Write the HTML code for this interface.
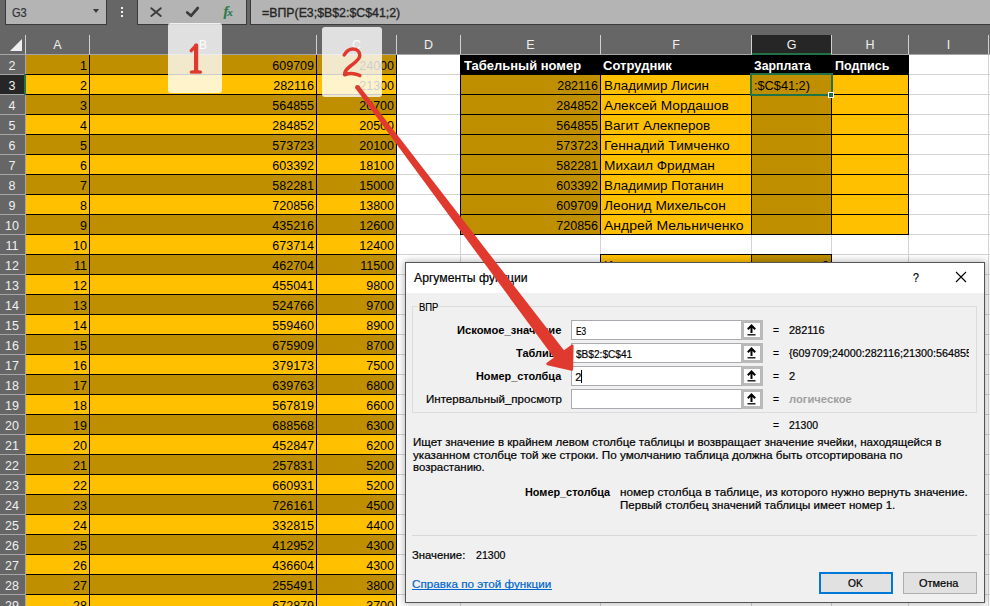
<!DOCTYPE html><html><head><meta charset="utf-8"><style>
*{box-sizing:border-box}
body{margin:0;width:990px;height:606px;overflow:hidden;position:relative;background:#fff;font-family:"Liberation Sans",sans-serif}
.a{position:absolute}
.t{position:absolute;white-space:nowrap;line-height:1;-webkit-text-stroke:0.2px currentColor}
.c{position:absolute;font-size:12.5px;color:#000;white-space:nowrap;line-height:23px}
.r{text-align:right}
.rh{position:absolute;left:0;width:24px;height:19px;background:#666;color:#f0f0f0;font-size:12.5px;text-align:center;line-height:23px}
.ch{position:absolute;top:35px;height:19px;background:#666;color:#f0f0f0;font-size:12.5px;text-align:center;line-height:20px}
</style></head><body>

<div class="a" style="left:0;top:0;width:990px;height:55px;background:#666"></div>
<div class="a" style="left:5px;top:-2px;width:102px;height:27px;background:#b4b4b4;border:1px solid #3a3a3a;border-top:none"></div>
<div class="t" style="left:12.40px;top:6.85px;font-size:12.3px;color:#333;transform:scaleX(0.9013);transform-origin:0.00px 0;">G3</div>
<div class="a" style="left:92.6px;top:9px;width:0;height:0;border-left:3.7px solid transparent;border-right:3.7px solid transparent;border-top:4.2px solid #3a3a3a"></div>
<div class="a" style="left:121px;top:7px;width:2px;height:2px;background:#f4f4f4"></div>
<div class="a" style="left:121px;top:11px;width:2px;height:2px;background:#f4f4f4"></div>
<div class="a" style="left:121px;top:15px;width:2px;height:2px;background:#f4f4f4"></div>
<div class="a" style="left:137px;top:-2px;width:110px;height:27px;background:#b4b4b4;border:1px solid #3a3a3a;border-top:none"></div>
<svg class="a" style="left:0;top:0" width="250" height="24"><path d="M151.3 8.2L160.8 16M160.8 8.2L151.3 16" stroke="#3c3c3c" stroke-width="1.9" stroke-linecap="round"/><path d="M187.2 12.4L191 15.8L197.8 8" stroke="#3c3c3c" stroke-width="2.7" fill="none" stroke-linecap="round" stroke-linejoin="round"/></svg>
<div class="t" style="left:223.5px;top:4px;font-family:'Liberation Serif',serif;font-style:italic;font-weight:bold;font-size:14.5px;color:#2a7a4a">f<span style="font-size:11px;position:relative;left:-1px">x</span></div>
<div class="a" style="left:250px;top:-2px;width:760px;height:27px;background:#b4b4b4;border:1px solid #3a3a3a;border-top:none"></div>
<div class="t" style="left:262.30px;top:6.85px;font-size:12.3px;color:#262626;transform:scaleX(1.0034);transform-origin:0.00px 0;-webkit-text-stroke:0.35px #262626;">=ВПР(E3;$B$2:$C$41;2)</div>
<div class="a" style="left:0;top:35px;width:990px;height:19px;background:#666"></div>
<svg class="a" style="left:10px;top:39px" width="13" height="13"><path d="M12 0L12 12L0 12Z" fill="#f0f0f0"/></svg>
<div class="ch" style="left:26px;width:63px;background:#666">A</div>
<div class="a" style="left:89px;top:35px;width:1px;height:19px;background:#d0d0d0"></div>
<div class="ch" style="left:90px;width:226px;background:#666">B</div>
<div class="a" style="left:316px;top:35px;width:1px;height:19px;background:#d0d0d0"></div>
<div class="ch" style="left:317px;width:79px;background:#666">C</div>
<div class="a" style="left:396px;top:35px;width:1px;height:19px;background:#d0d0d0"></div>
<div class="ch" style="left:397px;width:63px;background:#666">D</div>
<div class="a" style="left:460px;top:35px;width:1px;height:19px;background:#d0d0d0"></div>
<div class="ch" style="left:461px;width:139px;background:#666">E</div>
<div class="a" style="left:600px;top:35px;width:1px;height:19px;background:#d0d0d0"></div>
<div class="ch" style="left:601px;width:150px;background:#666">F</div>
<div class="a" style="left:751px;top:35px;width:1px;height:19px;background:#d0d0d0"></div>
<div class="ch" style="left:752px;width:79px;background:#262626">G</div>
<div class="a" style="left:831px;top:35px;width:1px;height:19px;background:#d0d0d0"></div>
<div class="ch" style="left:832px;width:76px;background:#666">H</div>
<div class="a" style="left:908px;top:35px;width:1px;height:19px;background:#d0d0d0"></div>
<div class="ch" style="left:909px;width:79px;background:#666">I</div>
<div class="a" style="left:988px;top:35px;width:1px;height:19px;background:#d0d0d0"></div>
<div class="a" style="left:25px;top:35px;width:1px;height:19px;background:#d0d0d0"></div>
<div class="a" style="left:0;top:54px;width:990px;height:1px;background:#a6a6a6"></div>
<div class="a" style="left:752px;top:53px;width:79px;height:2px;background:#217346"></div>
<div class="a" style="left:0;top:55px;width:25px;height:560px;background:#666"></div>
<div class="rh" style="top:55px;background:#666">2</div>
<div class="a" style="left:0;top:74px;width:25px;height:1px;background:#a6a6a6"></div>
<div class="rh" style="top:75px;background:#262626">3</div>
<div class="a" style="left:0;top:94px;width:25px;height:1px;background:#a6a6a6"></div>
<div class="rh" style="top:95px;background:#666">4</div>
<div class="a" style="left:0;top:114px;width:25px;height:1px;background:#a6a6a6"></div>
<div class="rh" style="top:115px;background:#666">5</div>
<div class="a" style="left:0;top:134px;width:25px;height:1px;background:#a6a6a6"></div>
<div class="rh" style="top:135px;background:#666">6</div>
<div class="a" style="left:0;top:154px;width:25px;height:1px;background:#a6a6a6"></div>
<div class="rh" style="top:155px;background:#666">7</div>
<div class="a" style="left:0;top:174px;width:25px;height:1px;background:#a6a6a6"></div>
<div class="rh" style="top:175px;background:#666">8</div>
<div class="a" style="left:0;top:194px;width:25px;height:1px;background:#a6a6a6"></div>
<div class="rh" style="top:195px;background:#666">9</div>
<div class="a" style="left:0;top:214px;width:25px;height:1px;background:#a6a6a6"></div>
<div class="rh" style="top:215px;background:#666">10</div>
<div class="a" style="left:0;top:234px;width:25px;height:1px;background:#a6a6a6"></div>
<div class="rh" style="top:235px;background:#666">11</div>
<div class="a" style="left:0;top:254px;width:25px;height:1px;background:#a6a6a6"></div>
<div class="rh" style="top:255px;background:#666">12</div>
<div class="a" style="left:0;top:274px;width:25px;height:1px;background:#a6a6a6"></div>
<div class="rh" style="top:275px;background:#666">13</div>
<div class="a" style="left:0;top:294px;width:25px;height:1px;background:#a6a6a6"></div>
<div class="rh" style="top:295px;background:#666">14</div>
<div class="a" style="left:0;top:314px;width:25px;height:1px;background:#a6a6a6"></div>
<div class="rh" style="top:315px;background:#666">15</div>
<div class="a" style="left:0;top:334px;width:25px;height:1px;background:#a6a6a6"></div>
<div class="rh" style="top:335px;background:#666">16</div>
<div class="a" style="left:0;top:354px;width:25px;height:1px;background:#a6a6a6"></div>
<div class="rh" style="top:355px;background:#666">17</div>
<div class="a" style="left:0;top:374px;width:25px;height:1px;background:#a6a6a6"></div>
<div class="rh" style="top:375px;background:#666">18</div>
<div class="a" style="left:0;top:394px;width:25px;height:1px;background:#a6a6a6"></div>
<div class="rh" style="top:395px;background:#666">19</div>
<div class="a" style="left:0;top:414px;width:25px;height:1px;background:#a6a6a6"></div>
<div class="rh" style="top:415px;background:#666">20</div>
<div class="a" style="left:0;top:434px;width:25px;height:1px;background:#a6a6a6"></div>
<div class="rh" style="top:435px;background:#666">21</div>
<div class="a" style="left:0;top:454px;width:25px;height:1px;background:#a6a6a6"></div>
<div class="rh" style="top:455px;background:#666">22</div>
<div class="a" style="left:0;top:474px;width:25px;height:1px;background:#a6a6a6"></div>
<div class="rh" style="top:475px;background:#666">23</div>
<div class="a" style="left:0;top:494px;width:25px;height:1px;background:#a6a6a6"></div>
<div class="rh" style="top:495px;background:#666">24</div>
<div class="a" style="left:0;top:514px;width:25px;height:1px;background:#a6a6a6"></div>
<div class="rh" style="top:515px;background:#666">25</div>
<div class="a" style="left:0;top:534px;width:25px;height:1px;background:#a6a6a6"></div>
<div class="rh" style="top:535px;background:#666">26</div>
<div class="a" style="left:0;top:554px;width:25px;height:1px;background:#a6a6a6"></div>
<div class="rh" style="top:555px;background:#666">27</div>
<div class="a" style="left:0;top:574px;width:25px;height:1px;background:#a6a6a6"></div>
<div class="rh" style="top:575px;background:#666">28</div>
<div class="a" style="left:0;top:594px;width:25px;height:1px;background:#a6a6a6"></div>
<div class="rh" style="top:595px;background:#666">29</div>
<div class="a" style="left:0;top:614px;width:25px;height:1px;background:#a6a6a6"></div>
<div class="a" style="left:25px;top:55px;width:1px;height:560px;background:#a6a6a6"></div>
<div class="a" style="left:24px;top:74px;width:2px;height:21px;background:#217346"></div>
<div class="a" style="left:397px;top:55px;width:600px;height:560px;background:#fff"></div>
<div class="a" style="left:460px;top:55px;width:1px;height:560px;background:#d4d4d4"></div>
<div class="a" style="left:600px;top:55px;width:1px;height:560px;background:#d4d4d4"></div>
<div class="a" style="left:751px;top:55px;width:1px;height:560px;background:#d4d4d4"></div>
<div class="a" style="left:831px;top:55px;width:1px;height:560px;background:#d4d4d4"></div>
<div class="a" style="left:908px;top:55px;width:1px;height:560px;background:#d4d4d4"></div>
<div class="a" style="left:988px;top:55px;width:1px;height:560px;background:#d4d4d4"></div>
<div class="a" style="left:397px;top:74px;width:600px;height:1px;background:#d4d4d4"></div>
<div class="a" style="left:397px;top:94px;width:600px;height:1px;background:#d4d4d4"></div>
<div class="a" style="left:397px;top:114px;width:600px;height:1px;background:#d4d4d4"></div>
<div class="a" style="left:397px;top:134px;width:600px;height:1px;background:#d4d4d4"></div>
<div class="a" style="left:397px;top:154px;width:600px;height:1px;background:#d4d4d4"></div>
<div class="a" style="left:397px;top:174px;width:600px;height:1px;background:#d4d4d4"></div>
<div class="a" style="left:397px;top:194px;width:600px;height:1px;background:#d4d4d4"></div>
<div class="a" style="left:397px;top:214px;width:600px;height:1px;background:#d4d4d4"></div>
<div class="a" style="left:397px;top:234px;width:600px;height:1px;background:#d4d4d4"></div>
<div class="a" style="left:397px;top:254px;width:600px;height:1px;background:#d4d4d4"></div>
<div class="a" style="left:397px;top:274px;width:600px;height:1px;background:#d4d4d4"></div>
<div class="a" style="left:397px;top:294px;width:600px;height:1px;background:#d4d4d4"></div>
<div class="a" style="left:397px;top:314px;width:600px;height:1px;background:#d4d4d4"></div>
<div class="a" style="left:397px;top:334px;width:600px;height:1px;background:#d4d4d4"></div>
<div class="a" style="left:397px;top:354px;width:600px;height:1px;background:#d4d4d4"></div>
<div class="a" style="left:397px;top:374px;width:600px;height:1px;background:#d4d4d4"></div>
<div class="a" style="left:397px;top:394px;width:600px;height:1px;background:#d4d4d4"></div>
<div class="a" style="left:397px;top:414px;width:600px;height:1px;background:#d4d4d4"></div>
<div class="a" style="left:397px;top:434px;width:600px;height:1px;background:#d4d4d4"></div>
<div class="a" style="left:397px;top:454px;width:600px;height:1px;background:#d4d4d4"></div>
<div class="a" style="left:397px;top:474px;width:600px;height:1px;background:#d4d4d4"></div>
<div class="a" style="left:397px;top:494px;width:600px;height:1px;background:#d4d4d4"></div>
<div class="a" style="left:397px;top:514px;width:600px;height:1px;background:#d4d4d4"></div>
<div class="a" style="left:397px;top:534px;width:600px;height:1px;background:#d4d4d4"></div>
<div class="a" style="left:397px;top:554px;width:600px;height:1px;background:#d4d4d4"></div>
<div class="a" style="left:397px;top:574px;width:600px;height:1px;background:#d4d4d4"></div>
<div class="a" style="left:397px;top:594px;width:600px;height:1px;background:#d4d4d4"></div>
<div class="a" style="left:397px;top:614px;width:600px;height:1px;background:#d4d4d4"></div>
<div class="a" style="left:26px;top:55px;width:371px;height:560px;background:#000"></div>
<div class="a" style="left:26px;top:55px;width:63px;height:19px;background:#bf8f00"></div>
<div class="a" style="left:90px;top:55px;width:226px;height:19px;background:#bf8f00"></div>
<div class="a" style="left:317px;top:55px;width:79px;height:19px;background:#bf8f00"></div>
<div class="c r" style="left:26px;top:55px;width:61px">1</div>
<div class="c r" style="left:90px;top:55px;width:224px">609709</div>
<div class="c r" style="left:317px;top:55px;width:77px">24000</div>
<div class="a" style="left:26px;top:75px;width:63px;height:19px;background:#ffc000"></div>
<div class="a" style="left:90px;top:75px;width:226px;height:19px;background:#ffc000"></div>
<div class="a" style="left:317px;top:75px;width:79px;height:19px;background:#ffc000"></div>
<div class="c r" style="left:26px;top:75px;width:61px">2</div>
<div class="c r" style="left:90px;top:75px;width:224px">282116</div>
<div class="c r" style="left:317px;top:75px;width:77px">21300</div>
<div class="a" style="left:26px;top:95px;width:63px;height:19px;background:#bf8f00"></div>
<div class="a" style="left:90px;top:95px;width:226px;height:19px;background:#bf8f00"></div>
<div class="a" style="left:317px;top:95px;width:79px;height:19px;background:#bf8f00"></div>
<div class="c r" style="left:26px;top:95px;width:61px">3</div>
<div class="c r" style="left:90px;top:95px;width:224px">564855</div>
<div class="c r" style="left:317px;top:95px;width:77px">20700</div>
<div class="a" style="left:26px;top:115px;width:63px;height:19px;background:#ffc000"></div>
<div class="a" style="left:90px;top:115px;width:226px;height:19px;background:#ffc000"></div>
<div class="a" style="left:317px;top:115px;width:79px;height:19px;background:#ffc000"></div>
<div class="c r" style="left:26px;top:115px;width:61px">4</div>
<div class="c r" style="left:90px;top:115px;width:224px">284852</div>
<div class="c r" style="left:317px;top:115px;width:77px">20500</div>
<div class="a" style="left:26px;top:135px;width:63px;height:19px;background:#bf8f00"></div>
<div class="a" style="left:90px;top:135px;width:226px;height:19px;background:#bf8f00"></div>
<div class="a" style="left:317px;top:135px;width:79px;height:19px;background:#bf8f00"></div>
<div class="c r" style="left:26px;top:135px;width:61px">5</div>
<div class="c r" style="left:90px;top:135px;width:224px">573723</div>
<div class="c r" style="left:317px;top:135px;width:77px">20100</div>
<div class="a" style="left:26px;top:155px;width:63px;height:19px;background:#ffc000"></div>
<div class="a" style="left:90px;top:155px;width:226px;height:19px;background:#ffc000"></div>
<div class="a" style="left:317px;top:155px;width:79px;height:19px;background:#ffc000"></div>
<div class="c r" style="left:26px;top:155px;width:61px">6</div>
<div class="c r" style="left:90px;top:155px;width:224px">603392</div>
<div class="c r" style="left:317px;top:155px;width:77px">18100</div>
<div class="a" style="left:26px;top:175px;width:63px;height:19px;background:#bf8f00"></div>
<div class="a" style="left:90px;top:175px;width:226px;height:19px;background:#bf8f00"></div>
<div class="a" style="left:317px;top:175px;width:79px;height:19px;background:#bf8f00"></div>
<div class="c r" style="left:26px;top:175px;width:61px">7</div>
<div class="c r" style="left:90px;top:175px;width:224px">582281</div>
<div class="c r" style="left:317px;top:175px;width:77px">15000</div>
<div class="a" style="left:26px;top:195px;width:63px;height:19px;background:#ffc000"></div>
<div class="a" style="left:90px;top:195px;width:226px;height:19px;background:#ffc000"></div>
<div class="a" style="left:317px;top:195px;width:79px;height:19px;background:#ffc000"></div>
<div class="c r" style="left:26px;top:195px;width:61px">8</div>
<div class="c r" style="left:90px;top:195px;width:224px">720856</div>
<div class="c r" style="left:317px;top:195px;width:77px">13800</div>
<div class="a" style="left:26px;top:215px;width:63px;height:19px;background:#bf8f00"></div>
<div class="a" style="left:90px;top:215px;width:226px;height:19px;background:#bf8f00"></div>
<div class="a" style="left:317px;top:215px;width:79px;height:19px;background:#bf8f00"></div>
<div class="c r" style="left:26px;top:215px;width:61px">9</div>
<div class="c r" style="left:90px;top:215px;width:224px">435216</div>
<div class="c r" style="left:317px;top:215px;width:77px">12600</div>
<div class="a" style="left:26px;top:235px;width:63px;height:19px;background:#ffc000"></div>
<div class="a" style="left:90px;top:235px;width:226px;height:19px;background:#ffc000"></div>
<div class="a" style="left:317px;top:235px;width:79px;height:19px;background:#ffc000"></div>
<div class="c r" style="left:26px;top:235px;width:61px">10</div>
<div class="c r" style="left:90px;top:235px;width:224px">673714</div>
<div class="c r" style="left:317px;top:235px;width:77px">12400</div>
<div class="a" style="left:26px;top:255px;width:63px;height:19px;background:#bf8f00"></div>
<div class="a" style="left:90px;top:255px;width:226px;height:19px;background:#bf8f00"></div>
<div class="a" style="left:317px;top:255px;width:79px;height:19px;background:#bf8f00"></div>
<div class="c r" style="left:26px;top:255px;width:61px">11</div>
<div class="c r" style="left:90px;top:255px;width:224px">462704</div>
<div class="c r" style="left:317px;top:255px;width:77px">11500</div>
<div class="a" style="left:26px;top:275px;width:63px;height:19px;background:#ffc000"></div>
<div class="a" style="left:90px;top:275px;width:226px;height:19px;background:#ffc000"></div>
<div class="a" style="left:317px;top:275px;width:79px;height:19px;background:#ffc000"></div>
<div class="c r" style="left:26px;top:275px;width:61px">12</div>
<div class="c r" style="left:90px;top:275px;width:224px">455041</div>
<div class="c r" style="left:317px;top:275px;width:77px">9800</div>
<div class="a" style="left:26px;top:295px;width:63px;height:19px;background:#bf8f00"></div>
<div class="a" style="left:90px;top:295px;width:226px;height:19px;background:#bf8f00"></div>
<div class="a" style="left:317px;top:295px;width:79px;height:19px;background:#bf8f00"></div>
<div class="c r" style="left:26px;top:295px;width:61px">13</div>
<div class="c r" style="left:90px;top:295px;width:224px">524766</div>
<div class="c r" style="left:317px;top:295px;width:77px">9700</div>
<div class="a" style="left:26px;top:315px;width:63px;height:19px;background:#ffc000"></div>
<div class="a" style="left:90px;top:315px;width:226px;height:19px;background:#ffc000"></div>
<div class="a" style="left:317px;top:315px;width:79px;height:19px;background:#ffc000"></div>
<div class="c r" style="left:26px;top:315px;width:61px">14</div>
<div class="c r" style="left:90px;top:315px;width:224px">559460</div>
<div class="c r" style="left:317px;top:315px;width:77px">8900</div>
<div class="a" style="left:26px;top:335px;width:63px;height:19px;background:#bf8f00"></div>
<div class="a" style="left:90px;top:335px;width:226px;height:19px;background:#bf8f00"></div>
<div class="a" style="left:317px;top:335px;width:79px;height:19px;background:#bf8f00"></div>
<div class="c r" style="left:26px;top:335px;width:61px">15</div>
<div class="c r" style="left:90px;top:335px;width:224px">675909</div>
<div class="c r" style="left:317px;top:335px;width:77px">8700</div>
<div class="a" style="left:26px;top:355px;width:63px;height:19px;background:#ffc000"></div>
<div class="a" style="left:90px;top:355px;width:226px;height:19px;background:#ffc000"></div>
<div class="a" style="left:317px;top:355px;width:79px;height:19px;background:#ffc000"></div>
<div class="c r" style="left:26px;top:355px;width:61px">16</div>
<div class="c r" style="left:90px;top:355px;width:224px">379173</div>
<div class="c r" style="left:317px;top:355px;width:77px">7500</div>
<div class="a" style="left:26px;top:375px;width:63px;height:19px;background:#bf8f00"></div>
<div class="a" style="left:90px;top:375px;width:226px;height:19px;background:#bf8f00"></div>
<div class="a" style="left:317px;top:375px;width:79px;height:19px;background:#bf8f00"></div>
<div class="c r" style="left:26px;top:375px;width:61px">17</div>
<div class="c r" style="left:90px;top:375px;width:224px">639763</div>
<div class="c r" style="left:317px;top:375px;width:77px">6800</div>
<div class="a" style="left:26px;top:395px;width:63px;height:19px;background:#ffc000"></div>
<div class="a" style="left:90px;top:395px;width:226px;height:19px;background:#ffc000"></div>
<div class="a" style="left:317px;top:395px;width:79px;height:19px;background:#ffc000"></div>
<div class="c r" style="left:26px;top:395px;width:61px">18</div>
<div class="c r" style="left:90px;top:395px;width:224px">567819</div>
<div class="c r" style="left:317px;top:395px;width:77px">6600</div>
<div class="a" style="left:26px;top:415px;width:63px;height:19px;background:#bf8f00"></div>
<div class="a" style="left:90px;top:415px;width:226px;height:19px;background:#bf8f00"></div>
<div class="a" style="left:317px;top:415px;width:79px;height:19px;background:#bf8f00"></div>
<div class="c r" style="left:26px;top:415px;width:61px">19</div>
<div class="c r" style="left:90px;top:415px;width:224px">688568</div>
<div class="c r" style="left:317px;top:415px;width:77px">6300</div>
<div class="a" style="left:26px;top:435px;width:63px;height:19px;background:#ffc000"></div>
<div class="a" style="left:90px;top:435px;width:226px;height:19px;background:#ffc000"></div>
<div class="a" style="left:317px;top:435px;width:79px;height:19px;background:#ffc000"></div>
<div class="c r" style="left:26px;top:435px;width:61px">20</div>
<div class="c r" style="left:90px;top:435px;width:224px">452847</div>
<div class="c r" style="left:317px;top:435px;width:77px">6200</div>
<div class="a" style="left:26px;top:455px;width:63px;height:19px;background:#bf8f00"></div>
<div class="a" style="left:90px;top:455px;width:226px;height:19px;background:#bf8f00"></div>
<div class="a" style="left:317px;top:455px;width:79px;height:19px;background:#bf8f00"></div>
<div class="c r" style="left:26px;top:455px;width:61px">21</div>
<div class="c r" style="left:90px;top:455px;width:224px">257831</div>
<div class="c r" style="left:317px;top:455px;width:77px">5200</div>
<div class="a" style="left:26px;top:475px;width:63px;height:19px;background:#ffc000"></div>
<div class="a" style="left:90px;top:475px;width:226px;height:19px;background:#ffc000"></div>
<div class="a" style="left:317px;top:475px;width:79px;height:19px;background:#ffc000"></div>
<div class="c r" style="left:26px;top:475px;width:61px">22</div>
<div class="c r" style="left:90px;top:475px;width:224px">660931</div>
<div class="c r" style="left:317px;top:475px;width:77px">5200</div>
<div class="a" style="left:26px;top:495px;width:63px;height:19px;background:#bf8f00"></div>
<div class="a" style="left:90px;top:495px;width:226px;height:19px;background:#bf8f00"></div>
<div class="a" style="left:317px;top:495px;width:79px;height:19px;background:#bf8f00"></div>
<div class="c r" style="left:26px;top:495px;width:61px">23</div>
<div class="c r" style="left:90px;top:495px;width:224px">726161</div>
<div class="c r" style="left:317px;top:495px;width:77px">4500</div>
<div class="a" style="left:26px;top:515px;width:63px;height:19px;background:#ffc000"></div>
<div class="a" style="left:90px;top:515px;width:226px;height:19px;background:#ffc000"></div>
<div class="a" style="left:317px;top:515px;width:79px;height:19px;background:#ffc000"></div>
<div class="c r" style="left:26px;top:515px;width:61px">24</div>
<div class="c r" style="left:90px;top:515px;width:224px">332815</div>
<div class="c r" style="left:317px;top:515px;width:77px">4400</div>
<div class="a" style="left:26px;top:535px;width:63px;height:19px;background:#bf8f00"></div>
<div class="a" style="left:90px;top:535px;width:226px;height:19px;background:#bf8f00"></div>
<div class="a" style="left:317px;top:535px;width:79px;height:19px;background:#bf8f00"></div>
<div class="c r" style="left:26px;top:535px;width:61px">25</div>
<div class="c r" style="left:90px;top:535px;width:224px">412952</div>
<div class="c r" style="left:317px;top:535px;width:77px">4300</div>
<div class="a" style="left:26px;top:555px;width:63px;height:19px;background:#ffc000"></div>
<div class="a" style="left:90px;top:555px;width:226px;height:19px;background:#ffc000"></div>
<div class="a" style="left:317px;top:555px;width:79px;height:19px;background:#ffc000"></div>
<div class="c r" style="left:26px;top:555px;width:61px">26</div>
<div class="c r" style="left:90px;top:555px;width:224px">436604</div>
<div class="c r" style="left:317px;top:555px;width:77px">4300</div>
<div class="a" style="left:26px;top:575px;width:63px;height:19px;background:#bf8f00"></div>
<div class="a" style="left:90px;top:575px;width:226px;height:19px;background:#bf8f00"></div>
<div class="a" style="left:317px;top:575px;width:79px;height:19px;background:#bf8f00"></div>
<div class="c r" style="left:26px;top:575px;width:61px">27</div>
<div class="c r" style="left:90px;top:575px;width:224px">255491</div>
<div class="c r" style="left:317px;top:575px;width:77px">3800</div>
<div class="a" style="left:26px;top:595px;width:63px;height:19px;background:#ffc000"></div>
<div class="a" style="left:90px;top:595px;width:226px;height:19px;background:#ffc000"></div>
<div class="a" style="left:317px;top:595px;width:79px;height:19px;background:#ffc000"></div>
<div class="c r" style="left:26px;top:595px;width:61px">28</div>
<div class="c r" style="left:90px;top:595px;width:224px">672879</div>
<div class="c r" style="left:317px;top:595px;width:77px">3700</div>
<div class="a" style="left:460px;top:55px;width:449px;height:180px;background:#000"></div>
<div class="t" style="left:463.70px;top:59.75px;font-size:12.5px;color:#fff;font-weight:bold;-webkit-text-stroke:0;transform:scaleX(1.0380);transform-origin:0.00px 0;">Табельный номер</div>
<div class="t" style="left:603.10px;top:59.75px;font-size:12.5px;color:#fff;font-weight:bold;-webkit-text-stroke:0;transform:scaleX(1.0434);transform-origin:0.00px 0;">Сотрудник</div>
<div class="t" style="left:754.20px;top:59.75px;font-size:12.5px;color:#fff;font-weight:bold;-webkit-text-stroke:0;transform:scaleX(0.9822);transform-origin:0.00px 0;">Зарплата</div>
<div class="t" style="left:834.50px;top:59.75px;font-size:12.5px;color:#fff;font-weight:bold;-webkit-text-stroke:0;transform:scaleX(1.0028);transform-origin:0.00px 0;">Подпись</div>
<div class="a" style="left:461px;top:75px;width:139px;height:19px;background:#bf8f00"></div>
<div class="a" style="left:601px;top:75px;width:150px;height:19px;background:#ffc000"></div>
<div class="a" style="left:752px;top:75px;width:79px;height:19px;background:#bf8f00"></div>
<div class="a" style="left:832px;top:75px;width:76px;height:19px;background:#ffc000"></div>
<div class="c r" style="left:461px;top:75px;width:137px">282116</div>
<div class="t" style="left:604.10px;top:79.75px;font-size:12.5px;color:#000;transform:scaleX(1.0684);transform-origin:0.00px 0;-webkit-text-stroke:0;">Владимир Лисин</div>
<div class="a" style="left:461px;top:95px;width:139px;height:19px;background:#bf8f00"></div>
<div class="a" style="left:601px;top:95px;width:150px;height:19px;background:#ffc000"></div>
<div class="a" style="left:752px;top:95px;width:79px;height:19px;background:#bf8f00"></div>
<div class="a" style="left:832px;top:95px;width:76px;height:19px;background:#ffc000"></div>
<div class="c r" style="left:461px;top:95px;width:137px">284852</div>
<div class="t" style="left:604.10px;top:99.75px;font-size:12.5px;color:#000;transform:scaleX(1.0951);transform-origin:0.00px 0;-webkit-text-stroke:0;">Алексей Мордашов</div>
<div class="a" style="left:461px;top:115px;width:139px;height:19px;background:#bf8f00"></div>
<div class="a" style="left:601px;top:115px;width:150px;height:19px;background:#ffc000"></div>
<div class="a" style="left:752px;top:115px;width:79px;height:19px;background:#bf8f00"></div>
<div class="a" style="left:832px;top:115px;width:76px;height:19px;background:#ffc000"></div>
<div class="c r" style="left:461px;top:115px;width:137px">564855</div>
<div class="t" style="left:604.10px;top:119.75px;font-size:12.5px;color:#000;transform:scaleX(1.0809);transform-origin:0.00px 0;-webkit-text-stroke:0;">Вагит Алекперов</div>
<div class="a" style="left:461px;top:135px;width:139px;height:19px;background:#bf8f00"></div>
<div class="a" style="left:601px;top:135px;width:150px;height:19px;background:#ffc000"></div>
<div class="a" style="left:752px;top:135px;width:79px;height:19px;background:#bf8f00"></div>
<div class="a" style="left:832px;top:135px;width:76px;height:19px;background:#ffc000"></div>
<div class="c r" style="left:461px;top:135px;width:137px">573723</div>
<div class="t" style="left:604.10px;top:139.75px;font-size:12.5px;color:#000;transform:scaleX(1.1021);transform-origin:0.00px 0;-webkit-text-stroke:0;">Геннадий Тимченко</div>
<div class="a" style="left:461px;top:155px;width:139px;height:19px;background:#bf8f00"></div>
<div class="a" style="left:601px;top:155px;width:150px;height:19px;background:#ffc000"></div>
<div class="a" style="left:752px;top:155px;width:79px;height:19px;background:#bf8f00"></div>
<div class="a" style="left:832px;top:155px;width:76px;height:19px;background:#ffc000"></div>
<div class="c r" style="left:461px;top:155px;width:137px">582281</div>
<div class="t" style="left:604.10px;top:159.75px;font-size:12.5px;color:#000;transform:scaleX(1.0930);transform-origin:0.00px 0;-webkit-text-stroke:0;">Михаил Фридман</div>
<div class="a" style="left:461px;top:175px;width:139px;height:19px;background:#bf8f00"></div>
<div class="a" style="left:601px;top:175px;width:150px;height:19px;background:#ffc000"></div>
<div class="a" style="left:752px;top:175px;width:79px;height:19px;background:#bf8f00"></div>
<div class="a" style="left:832px;top:175px;width:76px;height:19px;background:#ffc000"></div>
<div class="c r" style="left:461px;top:175px;width:137px">603392</div>
<div class="t" style="left:604.10px;top:179.75px;font-size:12.5px;color:#000;transform:scaleX(1.0702);transform-origin:0.00px 0;-webkit-text-stroke:0;">Владимир Потанин</div>
<div class="a" style="left:461px;top:195px;width:139px;height:19px;background:#bf8f00"></div>
<div class="a" style="left:601px;top:195px;width:150px;height:19px;background:#ffc000"></div>
<div class="a" style="left:752px;top:195px;width:79px;height:19px;background:#bf8f00"></div>
<div class="a" style="left:832px;top:195px;width:76px;height:19px;background:#ffc000"></div>
<div class="c r" style="left:461px;top:195px;width:137px">609709</div>
<div class="t" style="left:604.10px;top:199.75px;font-size:12.5px;color:#000;transform:scaleX(1.0988);transform-origin:0.00px 0;-webkit-text-stroke:0;">Леонид Михельсон</div>
<div class="a" style="left:461px;top:215px;width:139px;height:19px;background:#bf8f00"></div>
<div class="a" style="left:601px;top:215px;width:150px;height:19px;background:#ffc000"></div>
<div class="a" style="left:752px;top:215px;width:79px;height:19px;background:#bf8f00"></div>
<div class="a" style="left:832px;top:215px;width:76px;height:19px;background:#ffc000"></div>
<div class="c r" style="left:461px;top:215px;width:137px">720856</div>
<div class="t" style="left:604.10px;top:219.75px;font-size:12.5px;color:#000;transform:scaleX(1.1204);transform-origin:0.00px 0;-webkit-text-stroke:0;">Андрей Мельниченко</div>
<div class="t" style="left:753.90px;top:79.75px;font-size:12.5px;color:#000;transform:scaleX(1.0181);transform-origin:0.00px 0;-webkit-text-stroke:0;">:$C$41;2)</div>
<div class="a" style="left:750px;top:73px;width:83px;height:23px;border:2px solid #217346"></div>
<div class="a" style="left:828px;top:92px;width:6px;height:6px;background:#217346;border:1px solid #fff"></div>
<div class="a" style="left:600px;top:254px;width:232px;height:20px;background:#000"></div>
<div class="a" style="left:601px;top:255px;width:150px;height:19px;background:#ffc000"></div>
<div class="a" style="left:752px;top:255px;width:79px;height:19px;background:#bf8f00"></div>
<div class="t" style="left:604.10px;top:259.75px;font-size:12.5px;color:#000;">Итого</div>
<div class="t" style="left:822.06px;top:259.75px;font-size:12.5px;color:#000;">0</div>
<div class="a" style="left:405px;top:262px;width:580px;height:341px;background:#f0f0f0;border:1px solid #555;box-shadow:0 0 7px 1px rgba(0,0,0,0.28)"></div>
<div class="a" style="left:406px;top:263px;width:578px;height:30px;background:#fff"></div>
<div class="t" style="left:413.80px;top:271.85px;font-size:12.3px;color:#000;transform:scaleX(0.9921);transform-origin:0.00px 0;">Аргументы функции</div>
<div class="t" style="left:913.30px;top:270.75px;font-size:13.5px;color:#000;transform:scaleX(0.7875);transform-origin:0.00px 0;">?</div>
<svg class="a" style="left:955px;top:271px" width="12" height="12"><path d="M1 1L11 11M11 1L1 11" stroke="#000" stroke-width="1.1"/></svg>
<div class="a" style="left:412px;top:306px;width:565px;height:107px;border:1px solid #dcdcdc"></div>
<div class="a" style="left:418px;top:300px;width:21px;height:12px;background:#f0f0f0"></div>
<div class="t" style="left:418.80px;top:302.00px;font-size:11px;color:#000;transform:scaleX(0.8593);transform-origin:0.00px 0;">ВПР</div>
<div class="t" style="left:457.30px;top:324.50px;font-size:11px;color:#000;font-weight:bold;-webkit-text-stroke:0;transform:scaleX(1.0145);transform-origin:0.00px 0;">Искомое_значение</div>
<div class="t" style="left:516.00px;top:347.50px;font-size:11px;color:#000;font-weight:bold;-webkit-text-stroke:0;transform:scaleX(0.9951);transform-origin:0.00px 0;">Таблица</div>
<div class="t" style="left:476.40px;top:370.50px;font-size:11px;color:#000;font-weight:bold;-webkit-text-stroke:0;transform:scaleX(0.9904);transform-origin:0.00px 0;">Номер_столбца</div>
<div class="t" style="left:425.50px;top:393.50px;font-size:11px;color:#000;transform:scaleX(1.0489);transform-origin:0.00px 0;">Интервальный_просмотр</div>
<div class="a" style="left:571px;top:320px;width:171px;height:20px;background:#fff;border:1px solid #a9a9b0;border-right:none"></div>
<div class="a" style="left:741px;top:320px;width:22px;height:20px;background:#fff;border:3px solid #b9b9b9"></div>
<svg class="a" style="left:745px;top:324px" width="13" height="12"><path d="M6.5 1.5V9M2.8 5.2L6.5 1.5L10.2 5.2" stroke="#000" stroke-width="2" fill="none"/><path d="M2.5 10.8H10.5" stroke="#000" stroke-width="1.3"/></svg>
<div class="t" style="left:772.80px;top:325.00px;font-size:11px;color:#000;transform:scaleX(0.9324);transform-origin:0.00px 0;">=</div>
<div class="a" style="left:571px;top:343px;width:171px;height:20px;background:#fff;border:1px solid #a9a9b0;border-right:none"></div>
<div class="a" style="left:741px;top:343px;width:22px;height:20px;background:#fff;border:3px solid #b9b9b9"></div>
<svg class="a" style="left:745px;top:347px" width="13" height="12"><path d="M6.5 1.5V9M2.8 5.2L6.5 1.5L10.2 5.2" stroke="#000" stroke-width="2" fill="none"/><path d="M2.5 10.8H10.5" stroke="#000" stroke-width="1.3"/></svg>
<div class="t" style="left:772.80px;top:348.00px;font-size:11px;color:#000;transform:scaleX(0.9324);transform-origin:0.00px 0;">=</div>
<div class="a" style="left:571px;top:366px;width:171px;height:20px;background:#fff;border:1px solid #a9a9b0;border-right:none"></div>
<div class="a" style="left:741px;top:366px;width:22px;height:20px;background:#fff;border:3px solid #b9b9b9"></div>
<svg class="a" style="left:745px;top:370px" width="13" height="12"><path d="M6.5 1.5V9M2.8 5.2L6.5 1.5L10.2 5.2" stroke="#000" stroke-width="2" fill="none"/><path d="M2.5 10.8H10.5" stroke="#000" stroke-width="1.3"/></svg>
<div class="t" style="left:772.80px;top:371.00px;font-size:11px;color:#000;transform:scaleX(0.9324);transform-origin:0.00px 0;">=</div>
<div class="a" style="left:571px;top:389px;width:171px;height:20px;background:#fff;border:1px solid #a9a9b0;border-right:none"></div>
<div class="a" style="left:741px;top:389px;width:22px;height:20px;background:#fff;border:3px solid #b9b9b9"></div>
<svg class="a" style="left:745px;top:393px" width="13" height="12"><path d="M6.5 1.5V9M2.8 5.2L6.5 1.5L10.2 5.2" stroke="#000" stroke-width="2" fill="none"/><path d="M2.5 10.8H10.5" stroke="#000" stroke-width="1.3"/></svg>
<div class="t" style="left:772.80px;top:394.00px;font-size:11px;color:#000;transform:scaleX(0.9324);transform-origin:0.00px 0;">=</div>
<div class="t" style="left:576.00px;top:326.00px;font-size:11px;color:#000;transform:scaleX(0.7511);transform-origin:0.00px 0;">E3</div>
<div class="t" style="left:575.60px;top:348.50px;font-size:11px;color:#000;transform:scaleX(0.9189);transform-origin:0.00px 0;">$B$2:$C$41</div>
<div class="t" style="left:575.20px;top:371.50px;font-size:11px;color:#000;">2</div>
<div class="a" style="left:581px;top:370px;width:1px;height:13px;background:#000"></div>
<div class="t" style="left:789.00px;top:324.50px;font-size:11px;color:#000;transform:scaleX(0.9920);transform-origin:0.00px 0;">282116</div>
<div class="a" style="left:788px;top:340px;width:181px;height:22px;overflow:hidden"><div class="t" style="left:1.00px;top:8.00px;font-size:11px;color:#000;transform:scaleX(0.9820);transform-origin:0.00px 0;">{609709;24000:282116;21300:564855;20700</div></div>
<div class="t" style="left:789.00px;top:370.50px;font-size:11px;color:#000;">2</div>
<div class="t" style="left:789.00px;top:393.50px;font-size:11px;color:#a0a0a0;font-weight:bold;-webkit-text-stroke:0;transform:scaleX(1.0183);transform-origin:0.00px 0;">логическое</div>
<div class="t" style="left:772.80px;top:420.00px;font-size:11px;color:#000;transform:scaleX(0.9324);transform-origin:0.00px 0;">=</div>
<div class="t" style="left:789.00px;top:420.00px;font-size:11px;color:#000;transform:scaleX(0.9483);transform-origin:0.00px 0;">21300</div>
<div class="t" style="left:412.60px;top:436.90px;font-size:11px;color:#000;transform:scaleX(1.0494);transform-origin:0.00px 0;">Ищет значение в крайнем левом столбце таблицы и возвращает значение ячейки, находящейся в</div>
<div class="t" style="left:412.60px;top:449.70px;font-size:11px;color:#000;transform:scaleX(1.0634);transform-origin:0.00px 0;">указанном столбце той же строки. По умолчанию таблица должна быть отсортирована по</div>
<div class="t" style="left:412.60px;top:462.30px;font-size:11px;color:#000;transform:scaleX(1.0398);transform-origin:0.00px 0;">возрастанию.</div>
<div class="t" style="left:524.50px;top:487.00px;font-size:11px;color:#000;font-weight:bold;-webkit-text-stroke:0;transform:scaleX(0.9880);transform-origin:0.00px 0;">Номер_столбца</div>
<div class="t" style="left:619.70px;top:487.00px;font-size:11px;color:#000;transform:scaleX(1.0685);transform-origin:0.00px 0;">номер столбца в таблице, из которого нужно вернуть значение.</div>
<div class="t" style="left:619.70px;top:499.80px;font-size:11px;color:#000;transform:scaleX(1.0497);transform-origin:0.00px 0;">Первый столбец значений таблицы имеет номер 1.</div>
<div class="a" style="left:412px;top:535px;width:565px;height:1px;background:#d8d8d8"></div>
<div class="t" style="left:412.30px;top:550.00px;font-size:11px;color:#000;transform:scaleX(1.0282);transform-origin:0.00px 0;">Значение:</div>
<div class="t" style="left:476.00px;top:550.00px;font-size:11px;color:#000;transform:scaleX(0.9614);transform-origin:0.00px 0;">21300</div>
<div class="t" style="left:412.30px;top:579.00px;font-size:11px;color:#0066cc;transform:scaleX(1.0639);transform-origin:0.00px 0;">Справка по этой функции</div>
<div class="a" style="left:412px;top:589px;width:140px;height:1px;background:#0066cc"></div>
<div class="a" style="left:819px;top:572px;width:74px;height:22px;background:#e1e1e1;border:2px solid #0078d7"></div>
<div class="t" style="left:848.20px;top:577.60px;font-size:11px;color:#000;transform:scaleX(0.9311);transform-origin:0.00px 0;">OK</div>
<div class="a" style="left:903px;top:572px;width:74px;height:22px;background:#e1e1e1;border:1px solid #adadad"></div>
<div class="t" style="left:919.40px;top:577.60px;font-size:11px;color:#000;transform:scaleX(0.9977);transform-origin:0.00px 0;">Отмена</div>
<div class="a" style="left:168px;top:23px;width:54px;height:70px;background:rgba(255,255,255,0.8);border-radius:3px"></div>
<div class="a" style="left:322px;top:27px;width:60px;height:70px;background:rgba(255,255,255,0.8);border-radius:3px"></div>
<svg class="a" style="left:0;top:0" width="990" height="606"><path d="M191.2 50.6C193 48.8 194.8 46.8 196.3 45.2" stroke="#e03a2e" stroke-width="3.4" fill="none" stroke-linecap="round"/><path d="M196.1 45.5V71.5" stroke="#e03a2e" stroke-width="4.2" fill="none" stroke-linecap="round"/><path d="M191.4 72.1C194.5 71.7 197.5 71.7 200.4 72.1" stroke="#e03a2e" stroke-width="3.4" fill="none" stroke-linecap="round"/><path d="M344.2 55.0C346.5 51 349.5 49 352.8 49C357 49 359.8 51.5 359.8 55.5C359.8 59.5 355 62.5 350.5 66C346.5 69 344.5 71.5 344.6 74.8C348 73.6 352 73.4 355 73.9C357 74.2 358.5 74.8 359.8 75.6" stroke="#e03a2e" stroke-width="3.5" fill="none" stroke-linecap="round" stroke-linejoin="round"/><circle cx="357.4" cy="87.2" r="2.3" fill="#e03a2e"/><path d="M359.24 85.81 L564.69 351.23 L554.71 358.77 L355.56 88.59Z" fill="#e03a2e"/><path d="M572.3 345.8L547.6 363.9L571.8 369.4Z" fill="#e03a2e" stroke="#e03a2e" stroke-width="2.6" stroke-linejoin="round"/></svg>
</body></html>
